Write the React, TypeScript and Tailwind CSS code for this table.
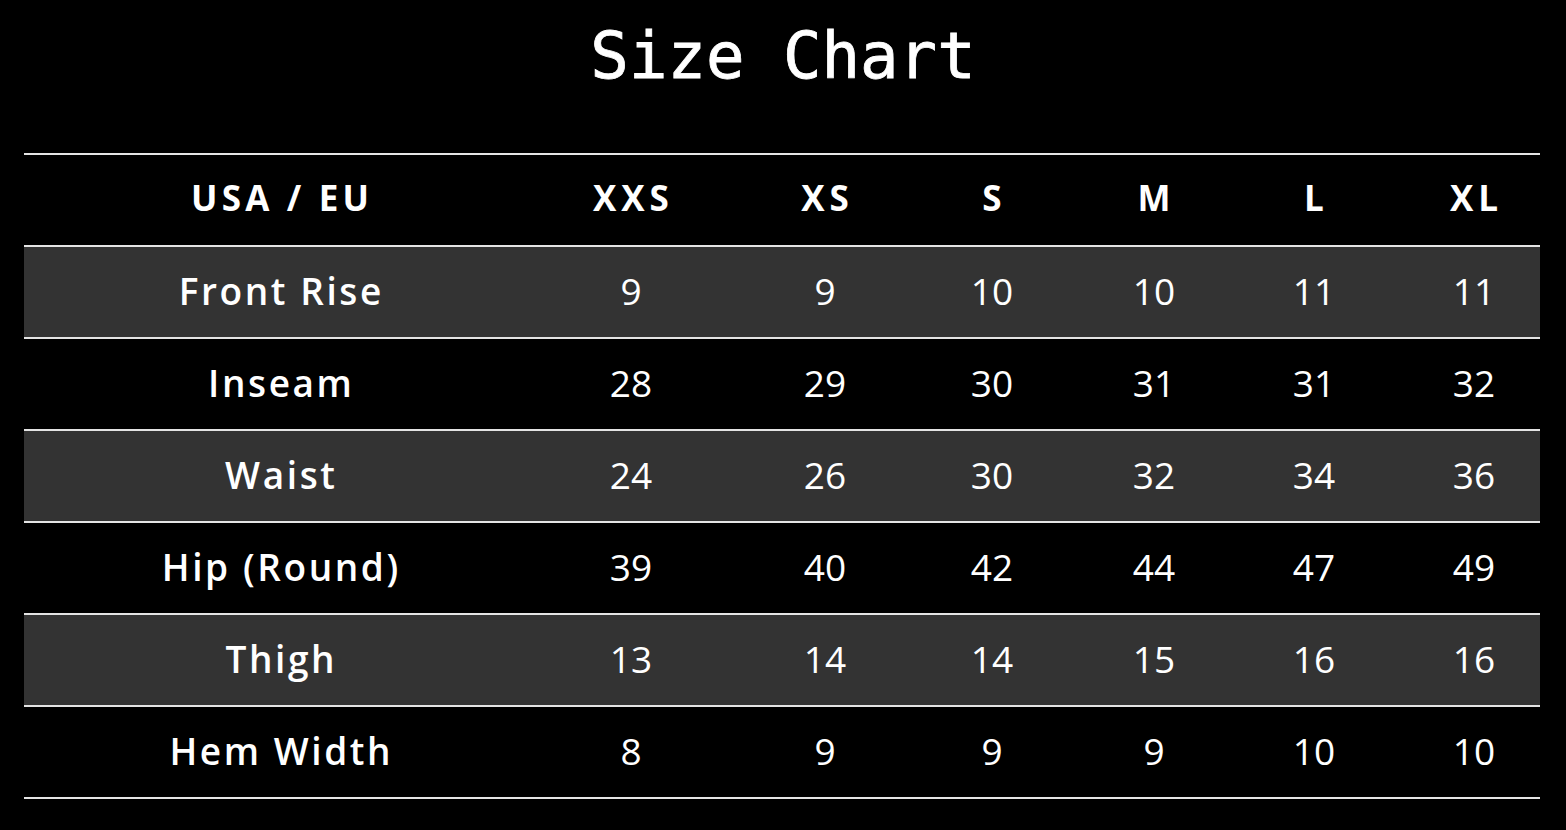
const sizes = ["XXS", "XS", "S", "M", "L", "XL"]

const rows: { label: string; values: number[] }[] = [
    { label: "Front Rise", values: [9, 9, 10, 10, 11, 11] },
    { label: "Inseam", values: [28, 29, 30, 31, 31, 32] },
    { label: "Waist", values: [24, 26, 30, 32, 34, 36] },
    { label: "Hip (Round)", values: [39, 40, 42, 44, 47, 49] },
    { label: "Thigh", values: [13, 14, 14, 15, 16, 16] },
    { label: "Hem Width", values: [8, 9, 9, 9, 10, 10] },
]

// per-column nudges so the text lands where the reference has it
const colPad = ["", "", "pl-[14px]", "", "", "", "pl-[14px]"]

const gridCols = "grid grid-cols-[512px_190px_184px_164px_160px_160px_146px]"

export default function App() {
    return (
        <div className="min-h-screen w-full bg-black text-white font-['Open_Sans',sans-serif]">
            {/* Title */}
            <div className="h-[153px] pt-[24px] text-center">
                <h1 className="font-['DejaVu_Sans_Mono',monospace] text-[64px] leading-none [-webkit-text-stroke:0.8px_white]">
                    Size Chart
                </h1>
            </div>

            {/* Table */}
            <div className="mx-[24px] w-[1516px] border-t-2 border-[#e4e4e4]">
                <div className={`${gridCols} h-[92px] items-center border-b-2 border-[#e4e4e4] bg-black`}>
                    <div className="flex justify-center pb-[3px] pl-[0.12em] text-[35px] font-bold tracking-[0.12em]">USA / EU</div>
                    {sizes.map((s, i) => (
                        <div
                            key={s}
                            className={`flex justify-center pb-[3px] text-[35px] font-bold tracking-[0.14em] ${colPad[i + 1]}`}
                        >
                            <span className="pl-[0.14em]">{s}</span>
                        </div>
                    ))}
                </div>

                {rows.map((r, ri) => (
                    <div
                        key={r.label}
                        className={`${gridCols} h-[92px] items-center border-b-2 border-[#e4e4e4] ${
                            ri % 2 === 0 ? "bg-[#333333]" : "bg-black"
                        }`}
                    >
                        <div className="flex justify-center pb-[3px] pl-[0.07em] text-[37px] font-semibold tracking-[0.07em]">
                            {r.label}
                        </div>
                        {r.values.map((v, i) => (
                            <div key={i} className={`flex justify-center pb-[3px] text-[37px] font-normal ${colPad[i + 1]}`}>
                                {v}
                            </div>
                        ))}
                    </div>
                ))}
            </div>
        </div>
    )
}
